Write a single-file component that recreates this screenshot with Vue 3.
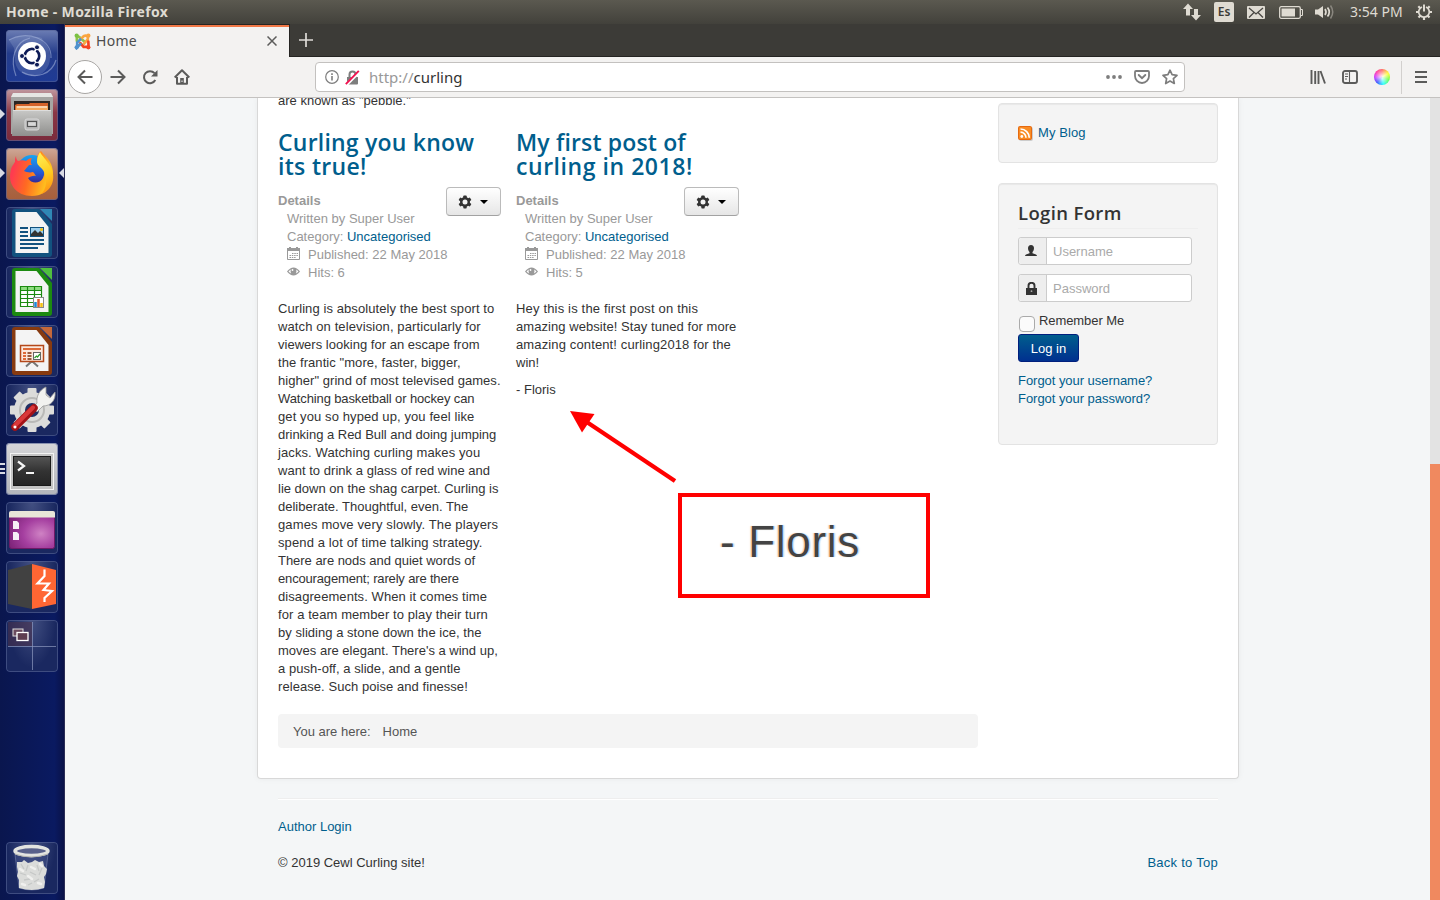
<script setup>
// Each body line carries its letter tracking in px.
const leftPost = [
  ['Curling is absolutely the best sport to', 0.08],
  ['watch on television, particularly for', 0.11],
  ['viewers looking for an escape from', 0.02],
  ['the frantic "more, faster, bigger,', 0.07],
  ['higher" grind of most televised games.', 0.05],
  ['Watching basketball or hockey can', -0.12],
  ['get you so hyped up, you feel like', 0.1],
  ['drinking a Red Bull and doing jumping', -0.02],
  ['jacks. Watching curling makes you', 0.1],
  ['want to drink a glass of red wine and', 0.03],
  ['lie down on the shag carpet. Curling is', 0],
  ['deliberate. Thoughtful, even. The', 0],
  ['games move very slowly. The players', 0.13],
  ['spend a lot of time talking strategy.', 0.12],
  ['There are nods and quiet words of', -0.03],
  ['encouragement; rarely are there', -0.16],
  ['disagreements. When it comes time', 0.07],
  ['for a team member to play their turn', 0.09],
  ['by sliding a stone down the ice, the', 0.03],
  ["moves are elegant. There's a wind up,", 0],
  ['a push-off, a slide, and a gentle', 0.04],
  ['release. Such poise and finesse!', 0.06],
]
const rightPost = [
  ['Hey this is the first post on this', 0.17],
  ['amazing website! Stay tuned for more', 0.06],
  ['amazing content! curling2018 for the', 0.13],
  ['win!', 0],
]
const posts = [
  { title: [['Curling you know', 0.22], ['its true!', 0.3]], hits: 6, lines: leftPost, sign: '' },
  { title: [['My first post of', 0.15], ['curling in 2018!', 0.55]], hits: 5, lines: rightPost, sign: '- Floris' },
]
</script>

<template>
  <div class="desktop">
    <header class="panel">
      <span class="wtitle">Home - Mozilla Firefox</span>
      <div class="tray">
        <svg class="t-net" width="18" height="18" viewBox="0 0 18 18"><path d="M5 .5 10 6H7V12.500H3V6H0zM13 17.500L8 12h3V6h4v6h3z" fill="#dfdbd2" /></svg>
        <span class="lang">Es</span>
        <svg class="t-mail" width="18" height="13" viewBox="0 0 18 13"><rect width="18" height="13" rx="1" fill="#dfdbd2" /><path d="M2 2l7 6 7-6M2 11.500l5-5M16 11.500l-5-5" fill="none" stroke="#4a4843" stroke-width="1.300" /></svg>
        <svg class="t-bat" width="24" height="13" viewBox="0 0 24 13"><rect x=".7" y=".7" width="20.600" height="11.600" rx="1.500" fill="none" stroke="#dfdbd2" stroke-width="1.300" /><rect x="2.500" y="2.500" width="13.500" height="8" fill="#dfdbd2" /><path d="M22 3.500h1.500v6H22" fill="none" stroke="#dfdbd2" /></svg>
        <svg class="t-vol" width="20" height="16" viewBox="0 0 20 16"><path d="M0 5.500h3L8 2v12L3 10.500H0z" fill="#dfdbd2" /><path d="M10 5q2 3 0 6M12.500 3.500q3.500 4.500 0 9" fill="none" stroke="#dfdbd2" stroke-width="1.700" /><path d="M15.500 1.500q4.500 6.500 0 13" fill="none" stroke="#8a877f" stroke-width="1.500" /></svg>
        <span class="clock">3:54 PM</span>
        <svg class="t-gear" width="16" height="16" viewBox="-8 -8 16 16"><path d="M-2 -5A5.300 5.300 0 1 0 2 -5" fill="none" stroke="#dfdbd2" stroke-width="1.700" /><path d="M0-7.500V-.5" stroke="#dfdbd2" stroke-width="2" /><path d="M5 0H8M-5 0H-8M0 5V8M3.500 3.500l2 2M-3.500 3.500l-2 2M3.700-3.700l2-2M-3.700-3.700l-2-2" stroke="#dfdbd2" stroke-width="2.200" /></svg>
      </div>
    </header>

    <div class="main">
      <aside class="launcher">
        <div class="tile t-dash">
          <svg width="52" height="52" viewBox="0 0 52 52">
            <path d="M3 10C16 2 46 6 44 28 44 38 36 46 28 46 14 46 6 36 10 22 13 10 26 4 36 8 40 20 40 34 26 40 14 38 8 30 8 18z" fill="#a9b9e0" fill-opacity=".22" />
            <path d="M3 10C20 0 46 8 45 28M10 46C4 30 8 12 24 8M50 30C46 44 30 50 16 42" fill="none" stroke="#b4c2e6" stroke-opacity=".5" stroke-width="1.200" />
            <circle cx="26" cy="26" r="14" fill="#fff" />
            <circle cx="26" cy="26" r="7.200" fill="none" stroke="#0d1b56" stroke-width="2.800" />
            <path d="M26 26H15.500M26 26l5.200-9M26 26l5.200 9" stroke="#fff" stroke-width="1.500" />
            <circle cx="26" cy="26" r="5.500" fill="#fff" />
            <g fill="#0d1b56" stroke="#fff"><circle cx="16" cy="26" r="2.500" /><circle cx="31" cy="17.300" r="2.500" /><circle cx="31" cy="34.700" r="2.500" /></g>
          </svg>
        </div>
        <div class="tile t-files">
          <svg width="52" height="52" viewBox="0 0 52 52">
            <defs><linearGradient id="cab" x2="0" y2="1"><stop stop-color="#c8c8c6" /><stop offset="1" stop-color="#8f8f8d" /></linearGradient></defs>
            <path d="M7 4H45L47 8V45H5V8z" fill="#a5a5a3" /><path d="M7 4H45L47 8H5z" fill="#e6e6e4" />
            <rect x="8" y="12" width="36" height="12" fill="#2b2522" /><path d="M9 22V16l2-1h12l1-1h18v8z" fill="#d4622a" /><path d="M10 22v-5h32v5z" fill="#f3a75c" /><path d="M11 18h30" stroke="#fff" />
            <path d="M7 21H45L46 47H6z" fill="url(#cab)" /><path d="M7 21.500H45" stroke="#ddd" />
            <rect x="19" y="30" width="14" height="11" rx="2" fill="#bbb" stroke="#d8d8d8" /><rect x="21.500" y="32.500" width="9" height="5" fill="#d8d8d8" stroke="#555" stroke-width="1.200" />
          </svg>
        </div>
        <div class="tile t-fox">
          <svg width="52" height="52" viewBox="0 0 52 52">
            <defs>
              <linearGradient id="fx" x1=".1" y1=".3" x2=".9" y2=".5"><stop stop-color="#ff3b50" /><stop offset=".45" stop-color="#ff6a22" /><stop offset="1" stop-color="#ffc21e" /></linearGradient>
              <linearGradient id="fy" x2=".2" y2="1"><stop stop-color="#fff25a" /><stop offset=".6" stop-color="#ffcc1f" /><stop offset="1" stop-color="#ff9a16" /></linearGradient>
              <linearGradient id="fb" x2="0" y2="1"><stop stop-color="#1aa5f0" /><stop offset=".6" stop-color="#2458d4" /><stop offset="1" stop-color="#3a1f86" /></linearGradient>
            </defs>
            <circle cx="26" cy="22" r="15" fill="url(#fb)" />
            <path d="M10 8c0 3 1 4 2 5 3-1 6-1 8 0 2-2 4-3 6-3-2 3-1 6 0 7h-3l-5 6c2 1 6 2 9 1 2 2 2 3 3 4-3-1-6 1-8 2 3 6 12 6 15 0 4-8-2-14-6-18 0-4 1-7 4-9 3 4 6 6 9 11 8 15 0 34-18 34C10 48 2 36 4.500 24 5 19 7 17 9 14c0-2 0-4 1-6z" fill="url(#fx)" />
            <path d="M34 4c2 4 6 7 10 14 8 13 0 26-9 28 6-5 6-15 3-22-2-5-7-6-7-10 0-4 1-7 3-10z" fill="url(#fy)" />
          </svg>
        </div>
        <div class="tile">
          <svg width="52" height="52" viewBox="0 0 52 52">
            <path d="M9 2H33L46 17V47Q46 50 43 50H9Q6 50 6 47V5Q6 2 9 2z" fill="#12527f" /><path d="M34 2H46V14z" fill="#2f87b5" />
            <path d="M9.500 5H30.500L42.500 20V46H9.500z" fill="#f4f4f4" />
            <path d="M14 21h8M14 25h8M14 29h8M14 33h24M14 37h24M14 41h18" stroke="#12527f" stroke-width="1.800" />
            <rect x="24.500" y="20.500" width="13" height="9" fill="#9fd0ee" stroke="#12527f" /><path d="M25 29v-2l4-4 3 3 2-2 3 3v2z" fill="#333" /><circle cx="35.500" cy="22.500" r="1.500" fill="#f5c211" />
          </svg>
        </div>
        <div class="tile">
          <svg width="52" height="52" viewBox="0 0 52 52">
            <path d="M9 2H33L46 17V47Q46 50 43 50H9Q6 50 6 47V5Q6 2 9 2z" fill="#1c8a10" /><path d="M34 2H46V14z" fill="#4fbf3f" />
            <path d="M9.500 5H30.500L42.500 20V46H9.500z" fill="#f4f4f4" />
            <rect x="14.500" y="20.500" width="21" height="20" fill="#fff" /><path d="M14 20h22v4H14z" fill="#8fdc80" /><path d="M14.500 20.500h21v20h-21zM14 24.500h22M14 28.500h22M14 32.500h22M14 36.500h22M21.500 20v21M28.500 20v21" fill="none" stroke="#1c8a10" stroke-width="1.200" />
            <rect x="27.500" y="31.500" width="10" height="10" fill="#fff" stroke="#888" /><path d="M29.500 41v-5" stroke="#1e88d8" stroke-width="2.500" /><path d="M32.500 41v-8" stroke="#e0582a" stroke-width="2.500" /><path d="M35.500 41v-4" stroke="#f5c211" stroke-width="2.500" />
          </svg>
        </div>
        <div class="tile">
          <svg width="52" height="52" viewBox="0 0 52 52">
            <path d="M9 2H33L46 17V47Q46 50 43 50H9Q6 50 6 47V5Q6 2 9 2z" fill="#873a10" /><path d="M34 2H46V14z" fill="#c4683a" />
            <path d="M9.500 5H30.500L42.500 20V46H9.500z" fill="#f4f4f4" />
            <path d="M20 41.500l5-4.500h2l5 4.500" fill="none" stroke="#777" stroke-width="2" />
            <rect x="14.500" y="20.500" width="23" height="16" fill="#fbe9de" stroke="#b4481a" stroke-width="1.500" /><path d="M17 24h18M17 28h3M17 31h3M17 34h3" stroke="#dd6a38" stroke-width="1.800" /><path d="M21.500 28h4M21.500 31h4M21.500 34h4" stroke="#7a2c08" stroke-width="1.700" />
            <rect x="27.500" y="27.500" width="7" height="7" fill="#fff" stroke="#666" /><path d="M28.500 33l2-2 1 1 2.500-3" fill="none" stroke="#2a9a2a" stroke-width="1.200" />
          </svg>
        </div>
        <div class="tile">
          <svg width="52" height="52" viewBox="0 0 52 52">
            <g transform="translate(26 26)"><g fill="#dcdcda"><circle r="18" /><rect v-for="n in 4" :key="n" x="-4.500" y="-22" width="9" height="44" rx="1" :transform="`rotate(${n * 45})`" /></g><circle r="12" fill="none" stroke="#b9b9b7" stroke-width="2" /><circle r="7" fill="#223064" /></g>
            <path d="M31 19c-1-6 2-13 9-16v8l4 3 5-6c1 8-4 14-12 14l-6 6-4-4z" fill="#f2f2f0" stroke="#999" stroke-width=".8" />
            <path d="M9 43L28 24" stroke="#a31217" stroke-width="7.500" stroke-linecap="round" /><path d="M8.500 42L27 23.500" stroke="#d9383a" stroke-width="4" stroke-linecap="round" /><circle cx="9" cy="43" r="1.500" fill="#fff" />
          </svg>
        </div>
        <div class="tile t-term">
          <svg width="52" height="52" viewBox="0 0 52 52">
            <defs><linearGradient id="tm" x2="0" y2="1"><stop stop-color="#555" /><stop offset=".5" stop-color="#333" /><stop offset="1" stop-color="#252525" /></linearGradient></defs>
            <rect x="4.500" y="10.500" width="43" height="36" fill="#c4c4c4" stroke="#f3f3f3" /><rect x="7.500" y="13.500" width="37" height="29" fill="url(#tm)" stroke="#1a1a1a" />
            <path d="M12 18.500l6 4.500-6 4.500" fill="none" stroke="#f5f5f5" stroke-width="2.200" /><path d="M20 30h8" stroke="#f5f5f5" stroke-width="2" />
          </svg>
        </div>
        <div class="tile">
          <svg width="52" height="52" viewBox="0 0 52 52">
            <defs><radialGradient id="pr" cx=".7" cy=".6" r=".8"><stop stop-color="#cf82c4" /><stop offset=".5" stop-color="#a53fa0" /><stop offset="1" stop-color="#7a2175" /></radialGradient></defs>
            <rect x="3.500" y="9.500" width="45" height="37" rx="2" fill="url(#pr)" stroke="#6f1a66" /><path d="M3 11q0-2 2-2H47q2 0 2 2v4.500H3z" fill="#e8e6d8" />
            <path d="M7 19h4l2 2v6H7zM7 30h4l2 2v6H7z" fill="#f6f0f6" />
          </svg>
        </div>
        <div class="tile">
          <svg width="52" height="52" viewBox="0 0 52 52">
            <path d="M2 9L26 3V48L2 43z" fill="#414141" /><path d="M26 3L50 9V43L26 48z" fill="#ff6633" />
            <path d="M38.500 8.500V15L31.500 22.500H43L37.500 29 46 30 38.500 37V41" fill="none" stroke="#fff" stroke-width="2.200" />
          </svg>
        </div>
        <div class="tile t-work">
          <svg width="52" height="52" viewBox="0 0 52 52">
            <rect x="2" y="2" width="24" height="24" fill="#4a2f48" fill-opacity=".55" /><path d="M26.500 2V50M2 26.500H50" stroke="#8d98bf" stroke-opacity=".7" />
            <rect x="7" y="9" width="10" height="7" fill="#6a4a5e" stroke="#ddd" /><rect x="11" y="12.500" width="11" height="8" fill="#5d3d50" stroke="#fff" stroke-width="1.300" />
          </svg>
        </div>
        <div class="tile t-trash">
          <svg width="52" height="52" viewBox="0 0 52 52">
            <path d="M9 12L13 46Q26 50 38 46L42 12z" fill="#46548a" fill-opacity=".5" stroke="#9aa6c8" stroke-opacity=".4" />
            <path d="M11 20l5 0 2-2 4 3 4-1 3-2 4 2 4-1 1 5 3 3-1 5-2 3 1 5-1 6q-12 4-25 0l0-8-2-4 1-4-1-5z" fill="#dbdcda" />
            <path d="M15 22l3 5M22 23l-2 6M14 31l6 2M24 30l6 3M31 23l2 6M36 26l-3 7M18 38l6-1M28 40l5-3M22 43l4-2" fill="none" stroke="#c6c8c7" stroke-width="1.300" />
            <path d="M14 27l3 2M25 25l4 2M34 22l2 2M22 34l4 3M32 41l3 1M16 42l3 1" stroke="#f0f0ee" stroke-width="2.500" stroke-linecap="round" />
            <ellipse cx="25.500" cy="9" rx="16.500" ry="4.500" fill="#59618a" stroke="#e3e4e0" stroke-width="3.500" /><path d="M9 12q16 6 33 0" fill="none" stroke="#b4b5af" />
          </svg>
        </div>
        <i class="pip p1"></i><i class="pip p2"></i><i class="pip p3"></i><i class="bars"></i>
      </aside>

      <section class="firefox">
        <div class="tabs">
          <div class="tab">
            <svg width="17" height="17" viewBox="0 0 16 16">
              <g fill="none" stroke-width="2.500" stroke-linecap="round"><path d="M3 9.500V6.500Q3 4 5.500 6L10 10" stroke="#8cc34a" transform="translate(-.3 -2)" /><path d="M6 6l3-3q2.500-1.500 4 .5V6L9.500 10" stroke="#f9a541" /><path d="M13 13L9 13M13.500 8l.2 5H9L6 9.500" stroke="#f44321" /><path d="M6 10.500L3 13.500V9l3-3" stroke="#4f91cd" /></g>
              <circle cx="2.500" cy="2.500" r="2" fill="#7ac143" /><circle cx="13.500" cy="2.500" r="2" fill="#f9a541" /><circle cx="2.500" cy="13.500" r="2" fill="#4f91cd" /><circle cx="13.500" cy="13.500" r="2" fill="#f44321" />
            </svg>
            <span>Home</span>
            <svg class="close" width="10" height="10" viewBox="0 0 10 10"><path d="M.5.5l9 9M9.500.5l-9 9" stroke="#5c5c5b" stroke-width="1.500" /></svg>
          </div>
          <svg class="plus" width="14" height="14" viewBox="0 0 14 14"><path d="M7 0V14M0 7H14" stroke="#dedcd8" stroke-width="1.700" /></svg>
        </div>

        <div class="toolbar">
          <div class="back"><svg width="16" height="16" viewBox="0 0 16 16"><path d="M15.500 8H1.500M8 1.500L1.500 8 8 14.500" fill="none" stroke="#5b5b5a" stroke-width="2" /></svg></div>
          <svg class="fwd" width="16" height="16" viewBox="0 0 16 16"><path d="M.5 8H14.500M8 1.500L14.500 8 8 14.500" fill="none" stroke="#5b5b5a" stroke-width="2" /></svg>
          <svg class="reload" width="16" height="16" viewBox="0 0 16 16"><path d="M13.300 11A6 6 0 1 1 12.500 4.200" fill="none" stroke="#5b5b5a" stroke-width="2" /><path d="M15.500 1v6.500H9z" fill="#5b5b5a" /></svg>
          <svg class="home" width="16" height="16" viewBox="0 0 16 16"><path d="M.7 8.500L8 1.200l7.300 7.300M3 8v6.800h10V8" fill="none" stroke="#5b5b5a" stroke-width="2" stroke-linejoin="round" /><path d="M6.200 15V9h3.600v6z" fill="#5b5b5a" /><path d="M8 11.500v1.500" stroke="#fff" /></svg>
          <div class="url">
            <svg width="14" height="14" viewBox="0 0 14 14"><circle cx="7" cy="7" r="6.300" fill="none" stroke="#7d7d7d" stroke-width="1.200" /><path d="M7 6V10.500M7 3.300V4.900" stroke="#7d7d7d" stroke-width="1.600" /></svg>
            <svg class="lock" width="15" height="15" viewBox="0 0 15 15"><path d="M2 7h11v6.500q0 1-1 1H3q-1 0-1-1z" fill="#7d7d7d" /><path d="M4.500 7V4.500a3 3 0 0 1 6 0V7" fill="none" stroke="#7d7d7d" stroke-width="2" /><path d="M1.500 14.800L14.500 1.500" stroke="#fff" stroke-width="3" /><path d="M.8 14.200L13.800.8" stroke="#f0114f" stroke-width="1.900" /></svg>
            <span class="addr"><em>http://</em>curling</span>
            <svg class="dots" width="16" height="4" viewBox="0 0 16 4"><g fill="#7d7d7d"><circle cx="2" cy="2" r="1.900" /><circle cx="8" cy="2" r="1.900" /><circle cx="14" cy="2" r="1.900" /></g></svg>
            <svg class="pocket" width="16" height="14" viewBox="0 0 16 14"><path d="M2 1h12q1 0 1 1v4a7 7 0 0 1-14 0V2q0-1 1-1z" fill="none" stroke="#7d7d7d" stroke-width="1.800" /><path d="M4.700 5L8 8.200 11.300 5" fill="none" stroke="#7d7d7d" stroke-width="1.900" stroke-linecap="round" /></svg>
            <svg class="star" width="16" height="16" viewBox="0 0 16 16"><path d="M8 1.200l2.100 4.500 4.900.6-3.600 3.300.9 4.900L8 12.100l-4.300 2.400.9-4.900L1 6.300l4.900-.6z" fill="none" stroke="#7d7d7d" stroke-width="1.700" stroke-linejoin="round" /></svg>
          </div>
          <svg class="lib" width="16" height="14" viewBox="0 0 16 14"><path d="M1.500 0V14M5.200 1V14M8.500 1V14M10.500 1L15 13.500" stroke="#5b5b5a" stroke-width="1.900" /></svg>
          <svg class="side" width="16" height="14" viewBox="0 0 16 14"><rect x="1" y="1" width="14" height="12" rx="2" fill="none" stroke="#5b5b5a" stroke-width="1.900" /><path d="M7.500 1V13M3 4h3M3 6.500h3M3 9h2" stroke="#5b5b5a" stroke-width="1.100" /></svg>
          <i class="wheel"></i>
          <div class="burger"><i></i><i></i><i></i></div>
        </div>

        <div class="viewport">
          <div class="page">
            <div class="card">
              <div class="content">
                <p class="prev">are known as "pebble."</p>
                <div class="posts">
                  <article v-for="p in posts" :key="p.hits">
                    <h2><template v-for="([text, track], n) in p.title" :key="text"><br v-if="n"><span :style="{ letterSpacing: track + 'px' }">{{ text }}</span></template></h2>
                    <div class="meta">
                      <div class="info">
                        <b>Details</b>
                        <span>Written by Super User</span>
                        <span>Category: <a>Uncategorised</a></span>
                        <span class="ic"><svg width="13" height="13" viewBox="0 0 13 13"><path d="M.5 1.500h12v11H.5z" fill="none" stroke="#999" /><path d="M0 1h13v3H0zM2 0h2v2H2zM9 0h2v2H9z" fill="#999" /><path d="M5 6.500h6M2.500 8.500H11M2.500 10.500H9" stroke="#999" stroke-width="1.200" stroke-dasharray="1.500 .8" /></svg>Published: 22 May 2018</span>
                        <span class="ic eye"><svg width="13" height="9" viewBox="0 0 13 9"><path d="M0 4.500Q6.500-3.500 13 4.500 6.500 12.500 0 4.500z" fill="#999" /><path d="M1.500 4.500Q3 2.700 3.700 2.400q-.5 2.600.5 4.200Q3 6 1.500 4.500zM11.500 4.500Q10 2.700 9.300 2.400q.5 2.600-.5 4.200 1.200-.6 2.700-2.100z" fill="#fff" /><circle cx="5.500" cy="3" r=".9" fill="#fff" /></svg>Hits: {{ p.hits }}</span>
                      </div>
                      <button class="gear"><svg width="14" height="14" viewBox="-7 -7 14 14"><g fill="#333"><circle r="5" /><rect v-for="n in 3" :key="n" x="-1.700" y="-6.500" width="3.400" height="13" rx=".7" :transform="`rotate(${n * 60})`" /></g><circle r="2.500" fill="#f4f4f4" /></svg><i></i></button>
                    </div>
                    <p class="body"><span v-for="[text, track] in p.lines" :key="text" :style="{ letterSpacing: track + 'px' }">{{ text }}</span></p>
                    <p v-if="p.sign" class="sign">{{ p.sign }}</p>
                  </article>
                </div>
                <div class="crumb"><span>You are here:</span><span>Home</span></div>
              </div>
              <div class="sidebar">
                <div class="well blog">
                  <svg width="15" height="15" viewBox="0 0 15 15"><rect x="1" y="1" width="14" height="14" rx="2" fill="#ccc" /><rect width="14" height="14" rx="2" fill="#e66a10" /><rect x="1" y="1" width="12" height="12" rx="1" fill="#f98c25" /><circle cx="3.800" cy="10.500" r="1.400" fill="#fff" /><path d="M2.500 6.200a5.500 5.500 0 0 1 5.500 5.600M2.500 3a8.800 8.800 0 0 1 8.800 8.800" fill="none" stroke="#fff" stroke-width="1.700" /></svg>
                  <a>My Blog</a>
                </div>
                <div class="well login">
                  <h3>Login Form</h3>
                  <div class="field"><i><svg width="12" height="12" viewBox="0 0 12 12"><path d="M6 0c2 0 3 1.300 3 3.300S8 6.500 7.500 7v1.200L11 9.500q1 .6 1 1.500H0q0-.9 1-1.500l3.500-1.300V7C4 6.500 3 5.300 3 3.300S4 0 6 0z" fill="#333" /></svg></i><span>Username</span></div>
                  <div class="field"><i><svg width="11" height="13" viewBox="0 0 11 13"><path d="M0 6h11v7H0z" fill="#333" /><path d="M2.500 6V3.800a3 3 0 0 1 6 0V6" fill="none" stroke="#333" stroke-width="1.900" /><circle cx="5.500" cy="9.200" r=".9" fill="#aaa" /></svg></i><span>Password</span></div>
                  <div class="remember"><i></i><span>Remember Me</span></div>
                  <button class="submit">Log in</button>
                  <div class="forgot"><a>Forgot your username?</a><a>Forgot your password?</a></div>
                </div>
              </div>
            </div>
            <footer>
              <a>Author Login</a>
              <div><span>© 2019 Cewl Curling site!</span><a class="top">Back to Top</a></div>
            </footer>
          </div>
          <div class="scroll"><i></i></div>
          <div class="callout"><span>- Floris</span></div>
          <svg class="arrow" width="120" height="80" viewBox="0 0 120 80"><path d="M26 11.500L115 71" stroke="#f00" stroke-width="4.200" /><path d="M10 1L34.500 4 22 22.500z" fill="#f00" /></svg>
        </div>
      </section>
    </div>
  </div>
</template>

<style>
html, body { margin: 0; overflow: hidden; }
</style>

<style scoped>
* { box-sizing: border-box; }
i, em { font-style: normal; }
svg { display: block; flex: none; }
.desktop { width: 1440px; height: 900px; display: flex; flex-direction: column; overflow: hidden; font: 13px/18px "Liberation Sans", Arial, sans-serif; color: #333; }
.panel { height: 24px; flex: none; display: flex; align-items: center; justify-content: space-between; padding: 0 8px 0 6px; background: linear-gradient(#5b5950, #42413b); font-family: "Noto Sans", "Open Sans", sans-serif; color: #dfdbd2; }
.wtitle { font-weight: 700; font-size: 14px; letter-spacing: .34px; }
.tray { display: flex; align-items: center; }
.lang { width: 20px; height: 20px; margin: 0 13px 0 13px; border-radius: 2px; background: #dfdbd2; color: #3c3b37; font-size: 12px; font-weight: 600; line-height: 20px; text-align: center; }
.t-bat { margin-left: 14px; }
.t-vol { margin-left: 12px; }
.clock { margin-left: 15px; width: 53px; font-size: 14px; white-space: nowrap; }
.t-gear { margin-left: 13px; }
.main { flex: 1; display: flex; min-height: 0; }
.launcher { width: 65px; flex: none; position: relative; display: flex; flex-direction: column; gap: 7px; padding: 6px 0 6px 6px; background: linear-gradient(90deg, #0a164e, #0a1a61 85%, #0a1248); border-right: 1px solid #2b2d56; }
.tile { width: 52px; height: 52px; flex: none; border-radius: 4px; overflow: hidden; background: radial-gradient(ellipse at 50% 0, #7f8bb466, transparent 65%), #1a2860; box-shadow: inset 0 0 0 1px #57649699; }
.t-dash { background: linear-gradient(#6c7db4, #243c8b 45%, #1f3b95); }
.t-files { background: linear-gradient(#c199a0, #8a3745 45%, #7a2b3c); }
.t-fox { background: linear-gradient(#cfa898, #ad6a49 55%, #a65f3c); }
.t-term { background: linear-gradient(#d5d5d8, #b3b5bb); }
.t-trash { margin-top: auto; }
.pip { position: absolute; border: 5px solid transparent; border-left-color: #d8dae3; border-right-width: 0; left: 0; }
.p1 { top: 85px; }
.p2 { top: 144px; }
.p3 { top: 144px; left: auto; right: 0; border-left-width: 0; border-right: 5px solid #d8dae3; }
.bars { position: absolute; left: 0; top: 439px; width: 5px; height: 11px; background: repeating-linear-gradient(#d8dae3 0 2px, transparent 2px 4.500px); }

.firefox { flex: 1; min-width: 0; display: flex; flex-direction: column; }
.tabs { height: 33px; flex: none; display: flex; background: #3c3b37; border-bottom: 1px solid #252422; font: 14px/18px "Noto Sans", "Open Sans", sans-serif; color: #4c4c4c; }
.tab { width: 225px; height: 33px; display: flex; align-items: center; padding: 0 12px 0 9px; background: #f3f2f1; border-top: 1px solid #252422; border-right: 1px solid #252422; box-shadow: inset 0 2px #f07746; }
.tab span { margin-left: 5px; flex: 1; letter-spacing: .3px; }
.plus { margin: 9px 0 0 9px; }
.toolbar { height: 41px; flex: none; display: flex; align-items: center; padding: 0 0 0 3px; background: #f3f2f1; border-bottom: 1px solid #c4c2c0; }
.back { width: 34px; height: 34px; display: grid; place-items: center; border: 1px solid #a8a6a4; border-radius: 50%; background: #fff; }
.fwd { margin-left: 8px; }
.reload { margin-left: 16px; }
.home { margin-left: 16px; }
.url { width: 870px; height: 30px; flex: none; margin-left: 125px; display: flex; align-items: center; padding: 0 6px 0 9px; background: #fff; border: 1px solid #c3c1bf; border-radius: 4px; }
.lock { margin-left: 6px; }
.addr { flex: 1; margin-left: 9px; font: 15px/20px "Noto Sans", sans-serif; color: #333; }
.addr em { color: #999; }
.pocket { margin-left: 12px; }
.star { margin-left: 12px; }
.lib { margin-left: 125px; }
.side { margin-left: 16px; }
.wheel { width: 16px; height: 16px; flex: none; margin-left: 16px; border-radius: 50%; background: radial-gradient(#fffc 10%, #fff0 70%), conic-gradient(#f66, #ff3 60deg, #6f4 110deg, #2ff 170deg, #35f 220deg, #c3f 270deg, #f3a 310deg, #f66); }
.burger { flex: none; margin-left: 11px; width: 39px; height: 33px; padding: 10px 0 0 13px; border-left: 1px solid #d2d0ce; }
.burger i { display: block; width: 12px; height: 2px; margin-bottom: 3px; background: #5b5b5a; }

.viewport { flex: 1; position: relative; display: flex; overflow: hidden; background: #f4f6f7; }
.page { flex: 1; padding-left: 192px; }
.card { width: 982px; height: 681px; display: flex; padding: 0 20px; background: #fff; border: 1px solid #d8d8d8; border-top: 0; border-radius: 0 0 4px 4px; box-shadow: 0 0 6px rgba(0, 0, 0, .05); }
p, h2, h3 { margin: 0; }
a { color: #005e8d; }
.content { width: 700px; }
.prev { margin-top: -6px; }
.posts { display: flex; gap: 14px; margin-top: 20px; height: 584px; }
article { width: 224px; white-space: nowrap; }
h2, h3 { font-family: "Open Sans", sans-serif; font-weight: 600; }
h2 { font-size: 23px; line-height: 24px; color: #005e8d; }
.body span, .info > *, .forgot a { display: block; }
.meta { display: flex; justify-content: space-between; margin-top: 14px; height: 108px; color: #999; }
.info span { padding-left: 9px; }
.info .ic { display: flex; gap: 8px; }
.info .eye svg { margin-top: 3px; }
.ic svg { margin-top: 1px; }
.gear { width: 55px; height: 29px; flex: none; margin: -5px 1px 0 0; position: relative; left: -1px; display: flex; align-items: center; padding: 0 0 0 11px; border: 1px solid #bbb; border-bottom-color: #a2a2a2; border-radius: 4px; background: linear-gradient(#fff, #e6e6e6); }
.gear i { margin: 1px 0 0 8px; border: 4px solid transparent; border-top-color: #000; border-bottom: 0; }
.sign { margin-top: 9px; }
.crumb { height: 34px; display: flex; gap: 12px; padding: 9px 15px; color: #555; background: #f4f4f4; border-radius: 4px; }
.sidebar { width: 220px; margin-left: 20px; padding-top: 5px; }
.well { border: 1px solid #e3e3e3; border-radius: 4px; background: #f4f4f4; box-shadow: inset 0 1px 1px rgba(0, 0, 0, .05); padding: 19px; }
.blog { height: 60px; display: flex; gap: 5px; padding-top: 20px; letter-spacing: .1px; }
.blog svg { margin-top: 2px; }
.login { height: 262px; margin-top: 20px; }
h3 { height: 26px; line-height: 20px; font-size: 18.500px; letter-spacing: .36px; border-bottom: 1px solid #eee; }
.field { width: 174px; height: 28px; margin-bottom: 9px; display: flex; border: 1px solid #ccc; border-radius: 3px; background: #fff; color: #aaa; line-height: 27px; }
h3 + .field { margin-top: 8px; }
.field i { width: 28px; display: grid; place-items: center; background: #eee; border-right: 1px solid #ccc; border-radius: 3px 0 0 3px; padding-right: 3px; }
.field span { margin-left: 6px; }
.remember { height: 18px; margin-top: 10px; display: flex; gap: 4px; padding-left: 1px; letter-spacing: -.08px; }
.remember i { width: 16px; height: 16px; margin-top: 4px; border: 1px solid #aaa; border-radius: 4px; background: #fbfbfb; }
.submit { display: block; width: 61px; height: 28px; margin-top: 4px; padding: 1px 0 0; border: 1px solid #001f7d; border-radius: 3px; background: linear-gradient(#005e8d, #00308f); color: #fff; font: inherit; }
.forgot { margin-top: 10px; letter-spacing: -.04px; }
footer { width: 940px; margin: 19px 0 0 21px; padding-top: 19px; border-top: 1px solid #eee; box-shadow: inset 0 1px #fff; }
footer > a { display: block; }
footer div { display: flex; justify-content: space-between; margin-top: 18px; }
.top { letter-spacing: .26px; }
.scroll { width: 10px; padding-top: 366px; background: #e3e3e3; }
.scroll i { display: block; height: 436px; background: #f0895f; }
.callout { position: absolute; left: 613px; top: 395px; width: 252px; height: 105px; border: 4px solid #f00; background: #fff; }
.callout span { position: absolute; left: 38px; top: 20px; font-size: 44px; line-height: 50px; color: #444; letter-spacing: .7px; white-space: nowrap; text-shadow: -1.500px 0 1px #f2b36a88, 1.500px 0 1px #6cbcf588; }
.arrow { position: absolute; left: 495px; top: 312px; }
</style>
